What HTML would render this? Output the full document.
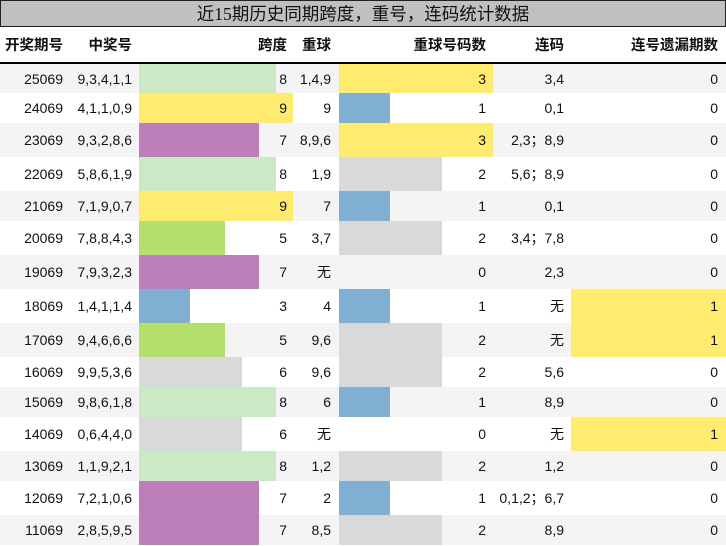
<!DOCTYPE html>
<html><head><meta charset="utf-8"><style>
*{margin:0;padding:0;box-sizing:border-box}
body{width:726px;height:546px;background:#fff;font-family:"Liberation Sans","Noto Sans CJK SC",sans-serif;font-size:14px;color:#111;overflow:hidden}
.title{position:absolute;left:0;top:0;width:726px;height:27px;background:#c0c0c0;border:1px solid #222;text-align:center;font-size:17.5px;line-height:27px;font-family:"Liberation Serif","Noto Sans CJK SC",sans-serif}
table{position:absolute;left:0;top:27px;border-collapse:collapse;table-layout:fixed;width:726px}
td,th{text-align:right;white-space:nowrap;padding:0}
th{height:36px;font-weight:bold;border-bottom:2px solid #000;font-size:14.5px}
tr.o td{background-color:#f4f4f4}
tr.s td{height:30px}tr.t td{height:34px}
.c1{padding-right:3px}.c2{padding-right:7px}.c3{padding-right:6px}.c4{padding-right:8px}.c5{padding-right:7px}.c6{padding-right:7px}.c7{padding-right:8px}
</style></head><body>
<div class="title">近15期历史同期跨度，重号，连码统计数据</div>
<table>
<colgroup><col style="width:66px"><col style="width:73px"><col style="width:154px"><col style="width:46px"><col style="width:154px"><col style="width:78px"><col style="width:155px"></colgroup>
<tr><th class="c1">开奖期号</th><th class="c2">中奖号</th><th class="c3">跨度</th><th class="c4">重球</th><th class="c5">重球号码数</th><th class="c6">连码</th><th class="c7">连号遗漏期数</th></tr>
<tr class="o s"><td class="c1">25069</td><td class="c2">9,3,4,1,1</td><td class="c3" style="background-image:linear-gradient(90deg,#cce9c5 137px,transparent 137px)">8</td><td class="c4">1,4,9</td><td class="c5" style="background-image:linear-gradient(90deg,#ffeb6e 154px,transparent 154px)">3</td><td class="c6">3,4</td><td class="c7">0</td></tr>
<tr class="s"><td class="c1">24069</td><td class="c2">4,1,1,0,9</td><td class="c3" style="background-image:linear-gradient(90deg,#ffeb6e 154px,transparent 154px)">9</td><td class="c4">9</td><td class="c5" style="background-image:linear-gradient(90deg,#7fb0d3 51px,transparent 51px)">1</td><td class="c6">0,1</td><td class="c7">0</td></tr>
<tr class="o t"><td class="c1">23069</td><td class="c2">9,3,2,8,6</td><td class="c3" style="background-image:linear-gradient(90deg,#bd7fbc 120px,transparent 120px)">7</td><td class="c4">8,9,6</td><td class="c5" style="background-image:linear-gradient(90deg,#ffeb6e 154px,transparent 154px)">3</td><td class="c6">2,3；8,9</td><td class="c7">0</td></tr>
<tr class="t"><td class="c1">22069</td><td class="c2">5,8,6,1,9</td><td class="c3" style="background-image:linear-gradient(90deg,#cce9c5 137px,transparent 137px)">8</td><td class="c4">1,9</td><td class="c5" style="background-image:linear-gradient(90deg,#d9d9d9 103px,transparent 103px)">2</td><td class="c6">5,6；8,9</td><td class="c7">0</td></tr>
<tr class="o s"><td class="c1">21069</td><td class="c2">7,1,9,0,7</td><td class="c3" style="background-image:linear-gradient(90deg,#ffeb6e 154px,transparent 154px)">9</td><td class="c4">7</td><td class="c5" style="background-image:linear-gradient(90deg,#7fb0d3 51px,transparent 51px)">1</td><td class="c6">0,1</td><td class="c7">0</td></tr>
<tr class="t"><td class="c1">20069</td><td class="c2">7,8,8,4,3</td><td class="c3" style="background-image:linear-gradient(90deg,#b5df6b 86px,transparent 86px)">5</td><td class="c4">3,7</td><td class="c5" style="background-image:linear-gradient(90deg,#d9d9d9 103px,transparent 103px)">2</td><td class="c6">3,4；7,8</td><td class="c7">0</td></tr>
<tr class="o t"><td class="c1">19069</td><td class="c2">7,9,3,2,3</td><td class="c3" style="background-image:linear-gradient(90deg,#bd7fbc 120px,transparent 120px)">7</td><td class="c4">无</td><td class="c5">0</td><td class="c6">2,3</td><td class="c7">0</td></tr>
<tr class="t"><td class="c1">18069</td><td class="c2">1,4,1,1,4</td><td class="c3" style="background-image:linear-gradient(90deg,#7fb0d3 51px,transparent 51px)">3</td><td class="c4">4</td><td class="c5" style="background-image:linear-gradient(90deg,#7fb0d3 51px,transparent 51px)">1</td><td class="c6">无</td><td class="c7" style="background-image:linear-gradient(90deg,#ffeb6e 155px,transparent 155px)">1</td></tr>
<tr class="o t"><td class="c1">17069</td><td class="c2">9,4,6,6,6</td><td class="c3" style="background-image:linear-gradient(90deg,#b5df6b 86px,transparent 86px)">5</td><td class="c4">9,6</td><td class="c5" style="background-image:linear-gradient(90deg,#d9d9d9 103px,transparent 103px)">2</td><td class="c6">无</td><td class="c7" style="background-image:linear-gradient(90deg,#ffeb6e 155px,transparent 155px)">1</td></tr>
<tr class="s"><td class="c1">16069</td><td class="c2">9,9,5,3,6</td><td class="c3" style="background-image:linear-gradient(90deg,#d9d9d9 103px,transparent 103px)">6</td><td class="c4">9,6</td><td class="c5" style="background-image:linear-gradient(90deg,#d9d9d9 103px,transparent 103px)">2</td><td class="c6">5,6</td><td class="c7">0</td></tr>
<tr class="o s"><td class="c1">15069</td><td class="c2">9,8,6,1,8</td><td class="c3" style="background-image:linear-gradient(90deg,#cce9c5 137px,transparent 137px)">8</td><td class="c4">6</td><td class="c5" style="background-image:linear-gradient(90deg,#7fb0d3 51px,transparent 51px)">1</td><td class="c6">8,9</td><td class="c7">0</td></tr>
<tr class="t"><td class="c1">14069</td><td class="c2">0,6,4,4,0</td><td class="c3" style="background-image:linear-gradient(90deg,#d9d9d9 103px,transparent 103px)">6</td><td class="c4">无</td><td class="c5">0</td><td class="c6">无</td><td class="c7" style="background-image:linear-gradient(90deg,#ffeb6e 155px,transparent 155px)">1</td></tr>
<tr class="o s"><td class="c1">13069</td><td class="c2">1,1,9,2,1</td><td class="c3" style="background-image:linear-gradient(90deg,#cce9c5 137px,transparent 137px)">8</td><td class="c4">1,2</td><td class="c5" style="background-image:linear-gradient(90deg,#d9d9d9 103px,transparent 103px)">2</td><td class="c6">1,2</td><td class="c7">0</td></tr>
<tr class="t"><td class="c1">12069</td><td class="c2">7,2,1,0,6</td><td class="c3" style="background-image:linear-gradient(90deg,#bd7fbc 120px,transparent 120px)">7</td><td class="c4">2</td><td class="c5" style="background-image:linear-gradient(90deg,#7fb0d3 51px,transparent 51px)">1</td><td class="c6">0,1,2；6,7</td><td class="c7">0</td></tr>
<tr class="o s"><td class="c1">11069</td><td class="c2">2,8,5,9,5</td><td class="c3" style="background-image:linear-gradient(90deg,#bd7fbc 120px,transparent 120px)">7</td><td class="c4">8,5</td><td class="c5" style="background-image:linear-gradient(90deg,#d9d9d9 103px,transparent 103px)">2</td><td class="c6">8,9</td><td class="c7">0</td></tr>
</table>
</body></html>
